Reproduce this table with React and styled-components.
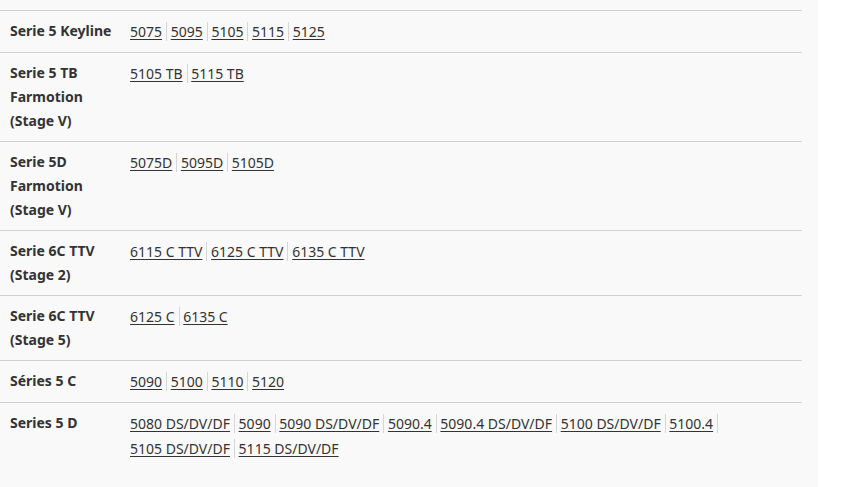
import React from 'react'
import styled, { createGlobalStyle } from 'styled-components'

const GlobalStyle = createGlobalStyle`
  body {
    margin: 0;
    background: #fff;
    font-family: "Noto Sans", "Open Sans", sans-serif;
    color: #333;
  }
`

const Page = styled.div`
  width: 818px;
  height: 487px;
  background: #f9f9f9;
  padding-top: 10px;
  box-sizing: border-box;
`

const Table = styled.div`
  width: 802px;
`

const Row = styled.div`
  display: grid;
  grid-template-columns: 120px 1fr;
  border-top: 1px solid #d2d2d2;
  padding: 8px 0;
`

const Label = styled.div`
  padding-left: 10px;
  font-size: 14px;
  font-weight: 700;
  line-height: 24px;
  color: #333;
`

const Links = styled.div`
  padding-left: 10px;
  font-size: 14px;
  line-height: 25px;
`

const Item = styled.span`
  padding-right: 4px;
  border-right: 1px solid #d6d6d6;
  white-space: nowrap;

  &:last-of-type {
    border-right: none;
  }
`

const Link = styled.a`
  color: #333;
  text-decoration: underline;
  text-underline-offset: 2px;
`

const series = [
  { label: 'Serie 5 Keyline', models: ['5075', '5095', '5105', '5115', '5125'] },
  { label: 'Serie 5 TB Farmotion (Stage V)', models: ['5105 TB', '5115 TB'] },
  { label: 'Serie 5D Farmotion (Stage V)', models: ['5075D', '5095D', '5105D'] },
  { label: 'Serie 6C TTV (Stage 2)', models: ['6115 C TTV', '6125 C TTV', '6135 C TTV'] },
  { label: 'Serie 6C TTV (Stage 5)', models: ['6125 C', '6135 C'] },
  { label: 'Séries 5 C', models: ['5090', '5100', '5110', '5120'] },
  {
    label: 'Series 5 D',
    models: [
      '5080 DS/DV/DF', '5090', '5090 DS/DV/DF', '5090.4', '5090.4 DS/DV/DF',
      '5100 DS/DV/DF', '5100.4', '5105 DS/DV/DF', '5115 DS/DV/DF',
    ],
  },
]

const App = () => {
  return (
    <Page>
      <GlobalStyle />
      <Table>
        {series.map((s) => (
          <Row key={s.label}>
            <Label>{s.label}</Label>
            <Links>
              {s.models.map((m) => (
                <React.Fragment key={m}>
                  <Item><Link href="#">{m}</Link></Item>{' '}
                </React.Fragment>
              ))}
            </Links>
          </Row>
        ))}
      </Table>
    </Page>
  )
}

export default App
